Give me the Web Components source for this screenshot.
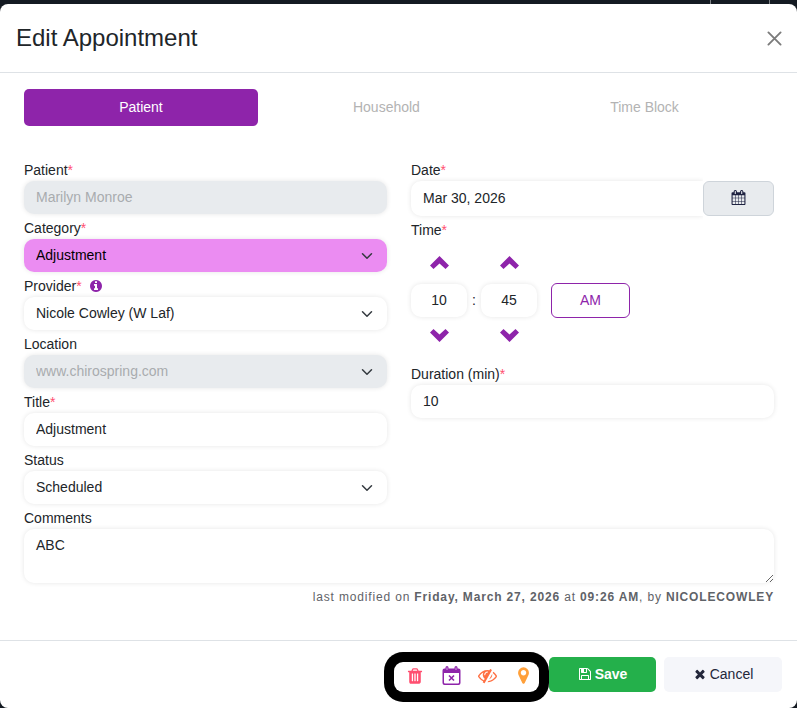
<!DOCTYPE html>
<html lang="en">
<head>
<meta charset="UTF-8">
<meta name="viewport" content="width=device-width, initial-scale=1">
<title>Edit Appointment</title>
<style>
    body {
        margin: 0;
        background: #141a22;
        color: #212529;
        font-family: "Liberation Sans", Arial, sans-serif;
        font-size: 14px;
        line-height: 21px;
        --primary: #8e24aa;
        --danger: #ff4f70;
        --muted-bg: #e8ebee;
        --muted-text: #a9acaf;
        --line: #dee2e6;
        --field-shadow: 0 0 5px rgba(0, 0, 0, 0.1);
    }
</style>
</head>
<body>
<appointment-dialog heading="Edit Appointment">
    <tab-bar slot="body" tabs="Patient,Household,Time Block" active="Patient"></tab-bar>
    <form-columns slot="body">
        <form-field slot="left" label="Patient" required disabled value="Marilyn Monroe"></form-field>
        <form-field slot="left" label="Category" required kind="select" value="Adjustment" class="category"></form-field>
        <form-field slot="left" label="Provider" required kind="select" value="Nicole Cowley (W Laf)">
            <app-icon slot="hint" name="info"></app-icon>
        </form-field>
        <form-field slot="left" label="Location" kind="select" disabled value="www.chirospring.com"></form-field>
        <form-field slot="left" label="Title" required value="Adjustment"></form-field>
        <form-field slot="left" label="Status" kind="select" value="Scheduled"></form-field>
        <date-field slot="right" label="Date" value="Mar 30, 2026"></date-field>
        <time-field slot="right" label="Time" hours="10" minutes="45" period="AM"></time-field>
        <form-field slot="right" label="Duration (min)" required value="10"></form-field>
    </form-columns>
    <form-field slot="body" label="Comments" kind="textarea" value="ABC"></form-field>
    <modified-note slot="body">last modified on <b>Friday, March 27, 2026</b> at <b>09:26 AM</b>, by <b>NICOLECOWLEY</b></modified-note>
    <quick-actions slot="footer"></quick-actions>
    <action-button slot="footer" icon="save" variant="save">Save</action-button>
    <action-button slot="footer" icon="times" variant="cancel">Cancel</action-button>
</appointment-dialog>

<script>
const ICONS = {
    close: ['0 0 16 16', '<path d="M1.500 1.500l13 13M14.500 1.500l-13 13" fill="none" stroke="currentColor" stroke-width="2" stroke-linecap="round"/>'],
    caret: ['0 0 16 16', '<path d="M2 5l6 6 6-6" fill="none" stroke="currentColor" stroke-width="2" stroke-linecap="round" stroke-linejoin="round"/>'],
    up: ['0 0 19 13', '<path d="M9.500 0L19 9.500 15.500 13 9.500 7.500 3.500 13 0 9.500z"/>'],
    down: ['0 0 19 13', '<path d="M9.500 13L19 3.500 15.500 0 9.500 5.500 3.500 0 0 3.500z"/>'],
    calendarX: ['0 0 18 19', '<path fill-rule="evenodd" d="M2 2.500H3V1.500Q3 0 4.500 0T6 1.500V2.500H12V1.500Q12 0 13.500 0T15 1.500V2.500H16Q18 2.500 18 4.500V17Q18 19 16 19H2Q0 19 0 17V4.500Q0 2.500 2 2.500zM1.500 7V16.500Q1.500 17.500 2.500 17.500H15.500Q16.500 17.500 16.500 16.500V7zM4.200 1.500V4H4.800V1.500zM13.200 1.500V4H13.800V1.500z"/><path d="M6.500 9.500l5 5M11.500 9.500l-5 5" fill="none" stroke="currentColor" stroke-width="1.600"/>'],
    times: ['0 0 1792 1792', '<path d="M1490 1322q0 40-28 68l-136 136q-28 28-68 28t-68-28l-294-294-294 294q-28 28-68 28t-68-28l-136-136q-28-28-28-68t28-68l294-294-294-294q-28-28-28-68t28-68l136-136q28-28 68-28t68 28l294 294 294-294q28-28 68-28t68 28l136 136q28 28 28 68t-28 68l-294 294 294 294q28 28 28 68z"/>'],
    marker: ['0 0 1792 1792', '<path d="M1152 640q0-106-75-181t-181-75-181 75-75 181 75 181 181 75 181-75 75-181zm256 0q0 109-33 179l-364 774q-16 33-47.5 52t-67.5 19-67.5-19-46.5-52l-365-774q-33-70-33-179 0-212 150-362t362-150 362 150 150 362z"/>'],
    trash: ['0 0 1792 1792', '<path d="M704 1376v-704q0-14-9-23t-23-9h-64q-14 0-23 9t-9 23v704q0 14 9 23t23 9h64q14 0 23-9t9-23zm256 0v-704q0-14-9-23t-23-9h-64q-14 0-23 9t-9 23v704q0 14 9 23t23 9h64q14 0 23-9t9-23zm256 0v-704q0-14-9-23t-23-9h-64q-14 0-23 9t-9 23v704q0 14 9 23t23 9h64q14 0 23-9t9-23zm-544-992h448l-48-117q-7-9-17-11h-317q-10 2-17 11zm928 32v64q0 14-9 23t-23 9h-96v948q0 83-47 143.5t-113 60.5h-832q-66 0-113-58.5t-47-141.5v-952h-96q-14 0-23-9t-9-23v-64q0-14 9-23t23-9h309l70-167q15-37 54-63t79-26h320q40 0 79 26t54 63l70 167h309q14 0 23 9t9 23z"/>'],
    info: ['0 0 1792 1792', '<path d="M1152 1376v-160q0-14-9-23t-23-9h-96v-512q0-14-9-23t-23-9h-320q-14 0-23 9t-9 23v160q0 14 9 23t23 9h96v320h-96q-14 0-23 9t-9 23v160q0 14 9 23t23 9h448q14 0 23-9t9-23zm-128-896v-160q0-14-9-23t-23-9h-192q-14 0-23 9t-9 23v160q0 14 9 23t23 9h192q14 0 23-9t9-23zm640 416q0 209-103 385.5t-279.5 279.5-385.5 103-385.5-103-279.5-279.5-103-385.5 103-385.5 279.5-279.5 385.5-103 385.5 103 279.5 279.5 103 385.5z"/>'],
    save: ['0 0 1792 1792', '<path d="M512 1536h768v-384h-768v384zm896 0h128v-896q0-14-10-38.5t-20-34.5l-281-281q-10-10-34-20t-39-10v416q0 40-28 68t-68 28h-576q-40 0-68-28t-28-68v-416h-128v1280h128v-416q0-40 28-68t68-28h832q40 0 68 28t28 68v416zm-384-928v-320q0-13-9.5-22.5t-22.5-9.5h-192q-13 0-22.5 9.5t-9.5 22.5v320q0 13 9.5 22.5t22.5 9.5h192q13 0 22.5-9.5t9.5-22.5zm640 32v928q0 40-28 68t-68 28h-1344q-40 0-68-28t-28-68v-1344q0-40 28-68t68-28h928q40 0 88 20t76 48l280 280q28 28 48 76t20 88z"/>'],
    calendar: ['0 0 1792 1792', '<path d="M192 1664h288v-288h-288v288zm352 0h320v-288h-320v288zm-352-352h288v-320h-288v320zm352 0h320v-320h-320v320zm-352-384h288v-288h-288v288zm736 736h320v-288h-320v288zm-384-736h320v-288h-320v288zm768 736h288v-288h-288v288zm-384-352h320v-320h-320v320zm-352-864v-288q0-13-9.5-22.5t-22.5-9.5h-64q-13 0-22.5 9.5t-9.5 22.5v288q0 13 9.5 22.5t22.5 9.5h64q13 0 22.5-9.5t9.5-22.5zm736 864h288v-320h-288v320zm-384-384h320v-288h-320v288zm384 0h288v-288h-288v288zm32-480v-288q0-13-9.5-22.5t-22.5-9.5h-64q-13 0-22.5 9.5t-9.5 22.5v288q0 13 9.5 22.5t22.5 9.5h64q13 0 22.5-9.5t9.5-22.5zm384-64v1280q0 52-38 90t-90 38h-1408q-52 0-90-38t-38-90v-1280q0-52 38-90t90-38h128v-96q0-66 47-113t113-47h64q66 0 113 47t47 113v96h384v-96q0-66 47-113t113-47h64q66 0 113 47t47 113v96h128q52 0 90 38t38 90z"/>'],
    eyeSlash: ['0 0 1792 1792', '<path d="M555 1335l78-141q-87-63-136-159t-49-203q0-121 61-225-229 117-381 353 167 258 427 375zm389-759q0-20-14-34t-34-14q-125 0-214.5 89.5t-89.5 214.5q0 20 14 34t34 14 34-14 14-34q0-86 61-147t147-61q20 0 34-14t14-34zm363-191q0 7-1 9-106 189-316 567t-315 566l-49 89q-10 16-28 16-12 0-134-70-16-10-16-28 0-12 44-87-143-65-263.5-173t-208.5-245q-20-31-20-69t20-69q153-235 380-371t496-136q89 0 180 17l54-97q10-16 28-16 5 0 18 6t31 15.5 33 18.5 31.5 18.5 19.5 11.5q16 10 16 27zm37 447q0 139-79 253.5t-209 164.5l280-502q8 45 8 84zm448 128q0 35-20 69-39 64-109 145-150 172-347.5 267t-419.5 95l74-132q212-18 392.5-137t301.5-307q-115-179-282-294l63-112q95 64 182.5 153t144.5 184q20 34 20 69z"/>']
};

// Shared by every element that draws a label or a text box
const fieldStyles = `
    :host { display: block; margin-bottom: 4px; }
    * { box-sizing: border-box; }
    .label { display: flex; align-items: center; height: 21px; }
    .star { color: var(--danger); }
    input, select, textarea {
        display: block;
        width: 100%;
        height: 33px;
        margin: 0;
        padding: 0 12px;
        border: 0;
        border-radius: 10px;
        background: #fff;
        box-shadow: var(--field-shadow);
        color: inherit;
        font: inherit;
        line-height: 21px;
        outline: 0;
    }
    input { padding-bottom: 2px; }
`;

class AppIcon extends HTMLElement {
    constructor() {
        super();
        const shadow = this.attachShadow({ mode: 'open' });
        const [viewBox, shape] = ICONS[this.getAttribute('name')];
        shadow.innerHTML = `
            <style>
                :host { display: block; flex: none; width: 14px; height: 14px; }
                svg { display: block; width: 100%; height: 100%; }
            </style>
            <svg viewBox="${viewBox}" fill="currentColor" aria-hidden="true">${shape}</svg>
        `;
    }
}

class AppointmentDialog extends HTMLElement {
    constructor() {
        super();
        const shadow = this.attachShadow({ mode: 'open' });
        shadow.innerHTML = `
            <style>
                :host { display: block; }
                /* Sliver of the page behind the dialog */
                .behind { display: flex; justify-content: flex-end; gap: 58px; height: 4px; padding-right: 27px; }
                .behind i { width: 1px; background: #7d8186; }
                section { background: #fff; border-radius: 8px; overflow: hidden; }
                header {
                    display: flex;
                    align-items: center;
                    justify-content: space-between;
                    height: 68px;
                    padding: 0 15px 0 16px;
                    border-bottom: 1px solid var(--line);
                }
                h1 { margin: 0; font-size: 24px; font-weight: 400; line-height: 36px; }
                .close { padding: 0; border: 0; background: none; color: #7b7b7b; }
                .close app-icon { width: 15px; height: 15px; }
                main { padding: 16px 23px 33px 24px; }
                footer {
                    display: flex;
                    align-items: flex-end;
                    justify-content: flex-end;
                    padding: 16px 15px;
                    border-top: 1px solid var(--line);
                }
            </style>
            <div class="behind"><i></i><i></i></div>
            <section role="dialog" aria-labelledby="heading">
                <header>
                    <h1 id="heading">${this.getAttribute('heading')}</h1>
                    <button class="close" type="button" aria-label="Close"><app-icon name="close"></app-icon></button>
                </header>
                <main><slot name="body"></slot></main>
                <footer><slot name="footer"></slot></footer>
            </section>
        `;
    }
}

class TabBar extends HTMLElement {
    constructor() {
        super();
        const shadow = this.attachShadow({ mode: 'open' });
        const active = this.getAttribute('active');
        const tabs = this.getAttribute('tabs').split(',').map(name =>
            `<button type="button" role="tab" aria-selected="${name === active}">${name}</button>`).join('');
        shadow.innerHTML = `
            <style>
                :host { display: block; margin-bottom: 34px; }
                div { display: flex; }
                button {
                    flex: 1 1 auto;
                    height: 37px;
                    padding: 0 16px;
                    border: 0;
                    border-radius: 5px;
                    background: none;
                    color: #b3b3b3;
                    font: inherit;
                }
                button[aria-selected="true"] { background: var(--primary); color: #fff; }
            </style>
            <div role="tablist">${tabs}</div>
        `;
    }
}

class FormColumns extends HTMLElement {
    constructor() {
        super();
        const shadow = this.attachShadow({ mode: 'open' });
        shadow.innerHTML = `
            <style>
                :host { display: grid; grid-template-columns: 1fr 1fr; gap: 24px; }
            </style>
            <div><slot name="left"></slot></div>
            <div><slot name="right"></slot></div>
        `;
    }
}

class FormField extends HTMLElement {
    constructor() {
        super();
        const shadow = this.attachShadow({ mode: 'open' });
        const value = this.getAttribute('value');
        const kind = this.getAttribute('kind');
        const disabled = this.hasAttribute('disabled') ? 'disabled' : '';
        const star = this.hasAttribute('required') ? '<span class="star">*</span>' : '';

        let control = `<input id="control" type="text" value="${value}" ${disabled}>`;
        if (kind === 'select') {
            control = `
                <div class="select">
                    <select id="control" ${disabled}><option>${value}</option></select>
                    <app-icon name="caret"></app-icon>
                </div>`;
        } else if (kind === 'textarea') {
            control = `<textarea id="control">${value}</textarea>`;
        }

        shadow.innerHTML = `
            <style>
                ${fieldStyles}
                ::slotted(app-icon) { margin: 0 0 1px 7px; color: var(--primary); }
                .select { display: grid; align-items: center; }
                .select > * { grid-area: 1 / 1; }
                .select app-icon { justify-self: end; width: 12px; height: 12px; margin-right: 14px; color: #343a40; pointer-events: none; }
                select { appearance: none; }
                textarea { height: 54px; padding: 6px 12px; resize: vertical; }
                :host(.category) select { background: #eb8cf2; color: #000; }
                :disabled { background: var(--muted-bg); color: var(--muted-text); opacity: 1; }
            </style>
            <div class="label"><label for="control">${this.getAttribute('label')}${star}</label><slot name="hint"></slot></div>
            ${control}
        `;
    }
}

class DateField extends HTMLElement {
    constructor() {
        super();
        const shadow = this.attachShadow({ mode: 'open' });
        shadow.innerHTML = `
            <style>
                ${fieldStyles}
                .group { display: flex; }
                .clip { flex: 1; margin: -6px 0 -6px -6px; padding: 6px 0 6px 6px; overflow: hidden; }
                input { height: 35px; border-radius: 10px 0 0 10px; }
                button {
                    display: flex;
                    align-items: center;
                    justify-content: center;
                    width: 71px;
                    height: 35px;
                    padding: 0;
                    border: 1px solid #ced4da;
                    border-radius: 6px;
                    background: var(--muted-bg);
                    color: #1d2140;
                }
                button app-icon { width: 15px; height: 15px; margin-bottom: 2px; }
            </style>
            <div class="label"><label for="date">${this.getAttribute('label')}<span class="star">*</span></label></div>
            <div class="group">
                <div class="clip"><input id="date" type="text" value="${this.getAttribute('value')}"></div>
                <button type="button" aria-label="Open calendar"><app-icon name="calendar"></app-icon></button>
            </div>
        `;
    }
}

class TimeField extends HTMLElement {
    constructor() {
        super();
        const shadow = this.attachShadow({ mode: 'open' });
        shadow.innerHTML = `
            <style>
                ${fieldStyles}
                :host { margin-bottom: 12px; }
                .grid {
                    display: grid;
                    grid-template-columns: 56px 14px 56px 14px 79px;
                    grid-template-rows: 42px 35px 34px;
                    grid-template-areas:
                        "hour-up . minute-up . ."
                        "hour colon minute . period"
                        "hour-down . minute-down . .";
                    align-items: center;
                    justify-items: center;
                }
                input { padding: 0 0 2px; text-align: center; }
                .step { padding: 0; border: 0; background: none; color: var(--primary); }
                .step app-icon { width: 19px; height: 13px; }
                .hour-up { grid-area: hour-up; }
                .minute-up { grid-area: minute-up; }
                .hour { grid-area: hour; }
                .colon { grid-area: colon; }
                .minute { grid-area: minute; }
                .period { grid-area: period; }
                .hour-down { grid-area: hour-down; }
                .minute-down { grid-area: minute-down; }
                .period {
                    width: 100%;
                    height: 35px;
                    padding: 0;
                    border: 1px solid #8e24aa;
                    border-radius: 6px;
                    background: #fff;
                    color: var(--primary);
                    font: inherit;
                }
            </style>
            <div class="label"><label for="hours">${this.getAttribute('label')}<span class="star">*</span></label></div>
            <div class="grid">
                <button class="step hour-up" type="button" aria-label="Hour up"><app-icon name="up"></app-icon></button>
                <button class="step minute-up" type="button" aria-label="Minute up"><app-icon name="up"></app-icon></button>
                <input class="hour" id="hours" type="text" value="${this.getAttribute('hours')}">
                <span class="colon">:</span>
                <input class="minute" type="text" aria-label="Minutes" value="${this.getAttribute('minutes')}">
                <button class="period" type="button">${this.getAttribute('period')}</button>
                <button class="step hour-down" type="button" aria-label="Hour down"><app-icon name="down"></app-icon></button>
                <button class="step minute-down" type="button" aria-label="Minute down"><app-icon name="down"></app-icon></button>
            </div>
        `;
    }
}

class ModifiedNote extends HTMLElement {
    constructor() {
        super();
        const shadow = this.attachShadow({ mode: 'open' });
        shadow.innerHTML = `
            <style>
                :host {
                    display: block;
                    color: #5f6368;
                    font-size: 12px;
                    line-height: 20px;
                    letter-spacing: 0.07em;
                    text-align: right;
                }
            </style>
            <slot></slot>
        `;
    }
}

class QuickActions extends HTMLElement {
    constructor() {
        super();
        const shadow = this.attachShadow({ mode: 'open' });
        shadow.innerHTML = `
            <style>
                :host {
                    display: flex;
                    align-items: center;
                    justify-content: space-between;
                    box-sizing: border-box;
                    width: 145px;
                    height: 30px;
                    margin-right: 10px;
                    padding: 0 6px 3px 11px;
                    border-radius: 9px;
                    box-shadow: 0 0 0 10px #000;
                }
                button { display: flex; justify-content: center; width: 20px; padding: 0; border: 0; background: none; }
                app-icon { width: 19px; height: 19px; }
                .trash { color: var(--danger); }
                .trash app-icon { width: 18px; height: 18px; }
                .cancel { color: var(--primary); }
                .hide { color: #ff7043; }
                .pin { color: #ffa03a; }
            </style>
            <button class="trash" type="button" aria-label="Delete"><app-icon name="trash"></app-icon></button>
            <button class="cancel" type="button" aria-label="Cancel appointment"><app-icon name="calendarX"></app-icon></button>
            <button class="hide" type="button" aria-label="No show"><app-icon name="eyeSlash"></app-icon></button>
            <button class="pin" type="button" aria-label="Check in"><app-icon name="marker"></app-icon></button>
        `;
    }
}

class ActionButton extends HTMLElement {
    constructor() {
        super();
        const shadow = this.attachShadow({ mode: 'open' });
        shadow.innerHTML = `
            <style>
                :host { display: block; }
                :host([variant="cancel"]) { margin-left: 8px; }
                button {
                    display: flex;
                    align-items: center;
                    justify-content: center;
                    gap: 3px;
                    min-width: 107px;
                    height: 35px;
                    padding: 0 28px;
                    border: 0;
                    border-radius: 5px;
                    font: inherit;
                }
                app-icon { margin-bottom: 2px; }
                .save { background: #24b04b; color: #fff; font-weight: 700; }
                .cancel { min-width: 118px; background: #f5f6fa; color: #23273a; }
            </style>
            <button type="button" class="${this.getAttribute('variant')}">
                <app-icon name="${this.getAttribute('icon')}"></app-icon><span><slot></slot></span>
            </button>
        `;
    }
}

customElements.define('app-icon', AppIcon);
customElements.define('appointment-dialog', AppointmentDialog);
customElements.define('tab-bar', TabBar);
customElements.define('form-columns', FormColumns);
customElements.define('form-field', FormField);
customElements.define('date-field', DateField);
customElements.define('time-field', TimeField);
customElements.define('modified-note', ModifiedNote);
customElements.define('quick-actions', QuickActions);
customElements.define('action-button', ActionButton);
</script>
</body>
</html>
